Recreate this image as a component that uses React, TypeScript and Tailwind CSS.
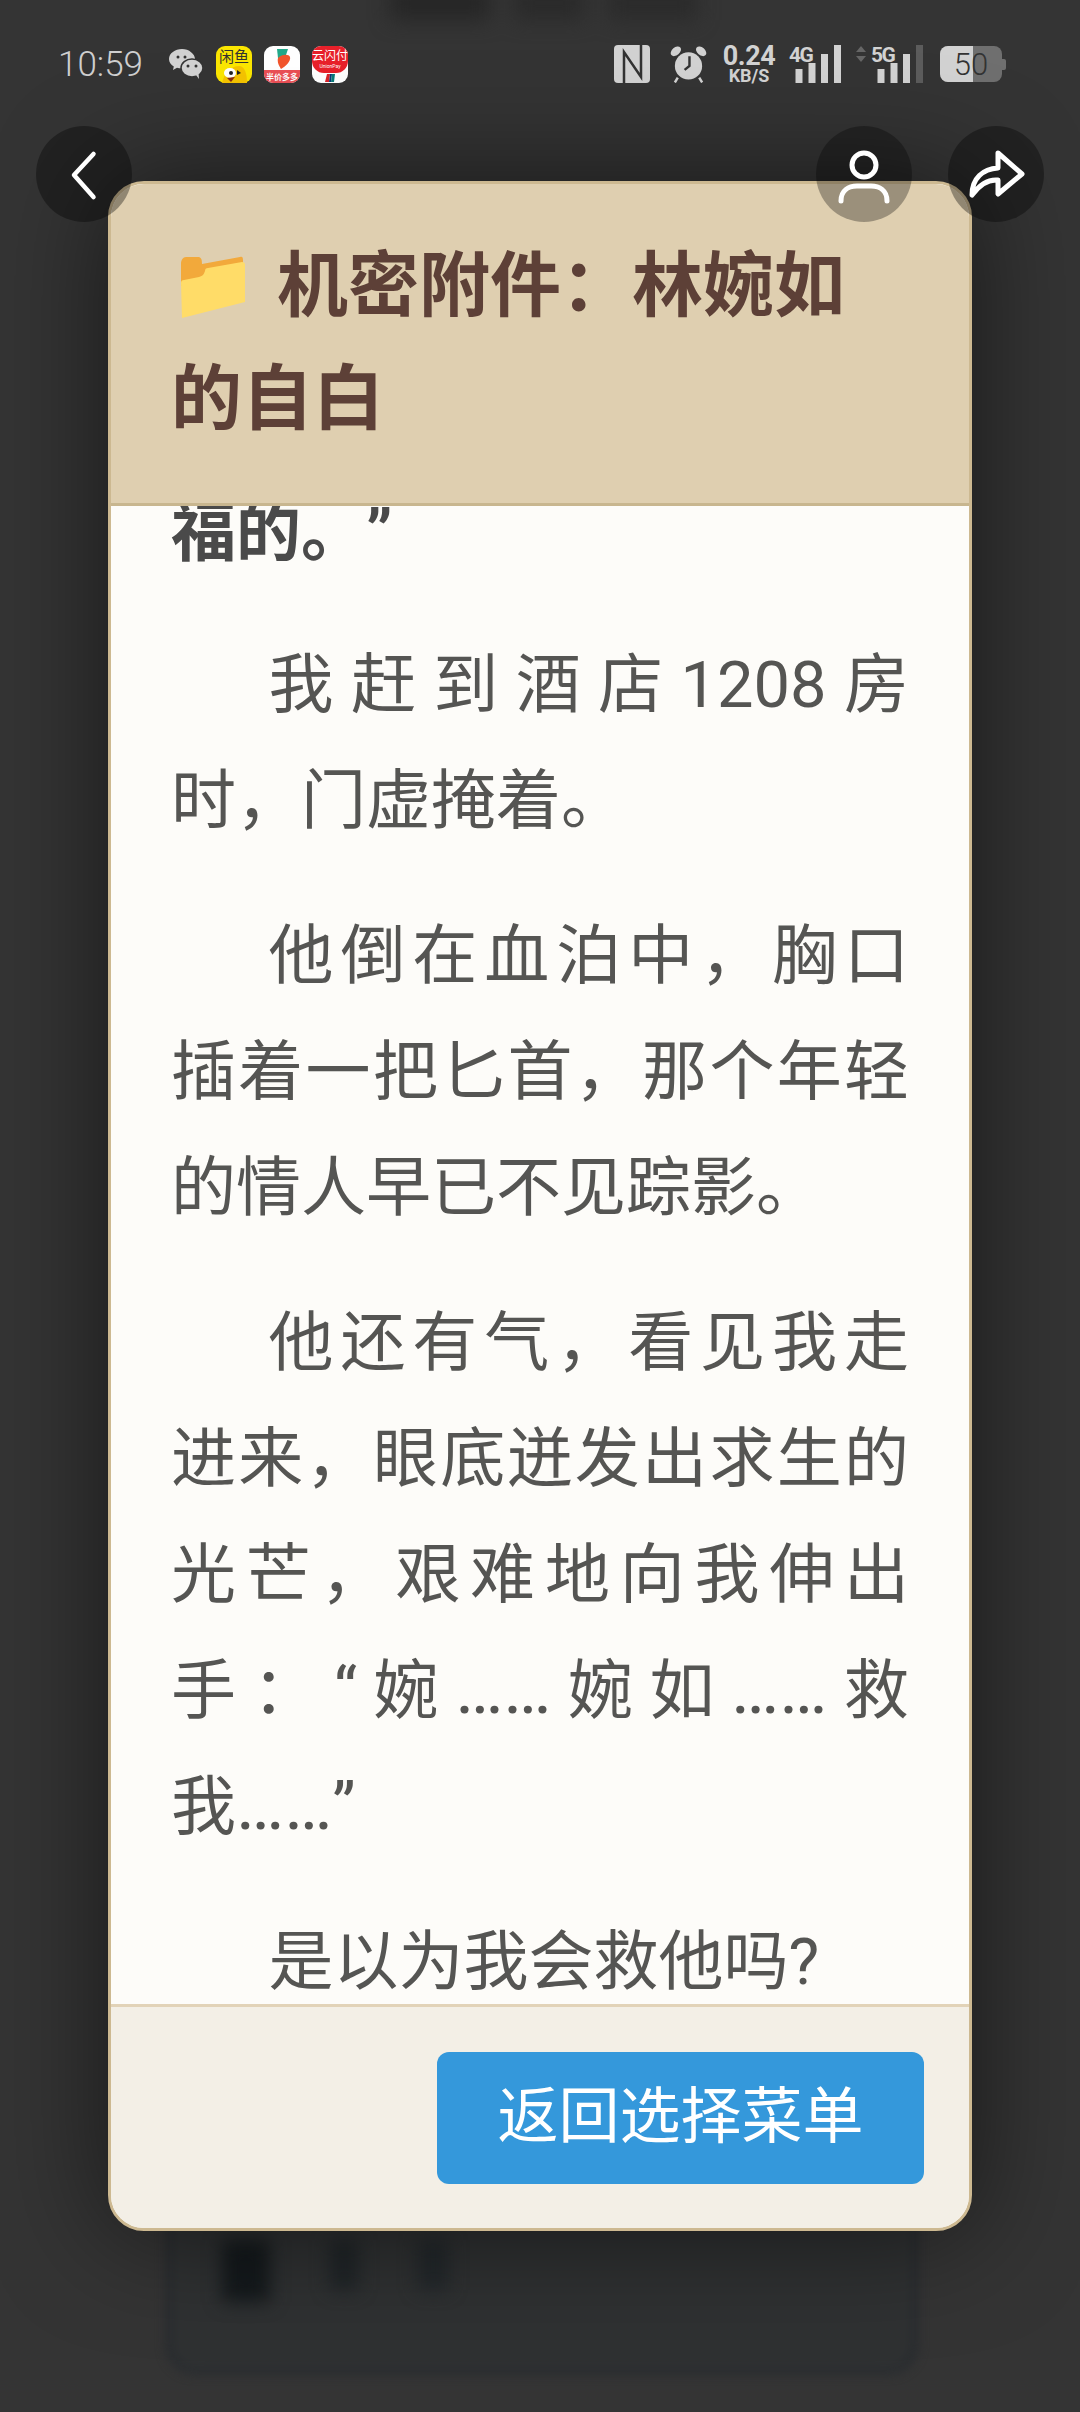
function Signal({ label, last }: { label: string; last?: boolean }) {
  return (
    <svg width="52" height="38" viewBox="0 0 52 38" className="block overflow-visible">
      <text x="0" y="17" fontSize="21" fontWeight="700" letterSpacing="-1.500" fill="#d2d2d2" fontFamily="Roboto, sans-serif">{label}</text>
      <rect x="6.500" y="24" width="7" height="14" fill="#d2d2d2" />
      <rect x="19.500" y="18" width="7" height="20" fill="#d2d2d2" />
      <rect x="32" y="9" width="7" height="29" fill="#d2d2d2" />
      <rect x="45" y="0" width="7" height="38" fill={last ? '#5c5c5c' : '#d2d2d2'} />
    </svg>
  );
}

function StatusBar() {
  return (
    <div className="mt-[45px] flex h-[38px] items-center justify-between pl-[58px] pr-[74px]">
      <div className="flex items-center">
        <span className="w-[111px] text-[35px] font-light leading-none text-[#cfcfcf] font-['Roboto',sans-serif]">10:59</span>
        {/* 微信 */}
        <svg width="34" height="30" viewBox="0 0 34 30">
          <path d="M13 0C6 0 0 4.400 0 10c0 3.200 1.800 5.800 4.800 7.600L4 21l4-2.300c1.400.4 2.700.6 5 .6C20 19.300 26 15 26 10S20 0 13 0z" fill="#d2d2d2" />
          <ellipse cx="23" cy="19" rx="11" ry="9" fill="#d2d2d2" stroke="#333" strokeWidth="1.500" />
          <path d="M27 26l3 4-.5-6z" fill="#d2d2d2" />
          <circle cx="19" cy="17" r="1.500" fill="#333" />
          <circle cx="27" cy="17" r="1.500" fill="#333" />
          <circle cx="9" cy="8" r="1.500" fill="#333" />
          <circle cx="16" cy="8" r="1.500" fill="#333" />
        </svg>
        <div className="ml-[13px] flex h-[37px] w-[36px] flex-col items-center rounded-[9px] bg-[#fbe600]">
          <span className="pt-[1px] text-[15px] leading-[18px] text-[#333] font-['Noto_Sans_CJK_SC',sans-serif]">闲鱼</span>
          <svg width="30" height="18" viewBox="0 0 30 18">
            <path d="M3 18C5 8 12 1 20 1c6 0 8 8 8 17z" fill="#f5c400" />
            <ellipse cx="11" cy="8" rx="6" ry="5" fill="#fff" />
            <circle cx="12" cy="8" r="2" fill="#222" />
            <path d="M18 5l4 3-4 2z" fill="#222" />
            <path d="M8 13l8-1-4 5z" fill="#8a2c10" />
          </svg>
        </div>
        <div className="ml-[12px] flex h-[37px] w-[36px] flex-col items-center overflow-hidden rounded-[9px] bg-white">
          <svg width="24" height="24" viewBox="0 0 24 24" className="shrink-0">
            <path d="M7 3h11l-3 9H8z" fill="#22a98a" />
            <path d="M8 12c4-4 11-4 12-1 1 4-4 9-9 12-2-3-4-7-3-11z" fill="#f2552c" />
          </svg>
          <span className="w-full flex-1 bg-[#ea4f55] text-center text-[8px] font-bold leading-[13px] text-white font-['Noto_Sans_CJK_SC',sans-serif]">半价多多</span>
        </div>
        <div className="ml-[12px] flex h-[37px] w-[36px] flex-col items-center overflow-hidden rounded-[9px] bg-white">
          <div className="flex h-[27px] w-full flex-col items-center rounded-b-[12px] bg-[#e8202a]">
            <span className="text-[12px] leading-[17px] text-white font-['Noto_Sans_CJK_SC',sans-serif]">云闪付</span>
            <span className="text-[5px] leading-[7px] text-white font-['Roboto',sans-serif]">UnionPay</span>
          </div>
          <svg width="10" height="8" viewBox="0 0 10 8" className="mt-[1px]">
            <path d="M2 0h3L4 8H0z" fill="#d8232a" />
            <path d="M5 0h2L6 8H4z" fill="#0a3a78" />
            <path d="M7 0h3L9 8H6z" fill="#0a7a78" />
          </svg>
        </div>
      </div>
      <div className="flex items-center">
        {/* NFC */}
        <svg width="36" height="38" viewBox="0 0 36 38">
          <rect width="36" height="38" rx="4" fill="#d2d2d2" />
          <path d="M10 38V7L27 32V0" fill="none" stroke="#333" strokeWidth="2.500" />
        </svg>
        {/* 闹钟 */}
        <svg width="37" height="38" viewBox="0 0 38 38" className="ml-[20px]">
          <circle cx="19" cy="21" r="14" fill="#d2d2d2" />
          <ellipse cx="6" cy="6" rx="6" ry="4" transform="rotate(-40 6 6)" fill="#d2d2d2" />
          <ellipse cx="32" cy="6" rx="6" ry="4" transform="rotate(40 32 6)" fill="#d2d2d2" />
          <path d="M8 33l-3 5M30 33l3 5" stroke="#d2d2d2" strokeWidth="2.500" />
          <path d="M20 11v10l-5 4" fill="none" stroke="#333" strokeWidth="2.500" />
        </svg>
        <div className="ml-[13px] flex w-[58px] flex-col items-center font-['Roboto',sans-serif] font-bold text-[#d2d2d2]">
          <span className="text-[27px] leading-[23px] tracking-[-0.5px]">0.24</span>
          <span className="text-[18px] leading-[15px]">KB/S</span>
        </div>
        <div className="ml-[11px]"><Signal label="4G" /></div>
        <div className="ml-[15px] flex items-start">
          <svg width="10" height="16" viewBox="0 0 10 16" className="mr-[5px] mt-[1px]">
            <path d="M5 0l5 6H0z" fill="#666" />
            <path d="M5 16l5-6H0z" fill="#666" />
          </svg>
          <Signal label="5G" last />
        </div>
        <div className="ml-[17px] flex items-center">
          <div className="relative flex h-[36px] w-[62px] items-center justify-center overflow-hidden rounded-[8px] bg-[#6f6f6f]">
            <div className="absolute inset-y-0 left-0 w-[33px] bg-[#d2d2d2]" />
            <span className="relative text-[31px] font-light leading-none text-[#333] font-['Roboto',sans-serif]">50</span>
          </div>
          <div className="h-[11px] w-[4px] rounded-r-[2px] bg-[#6f6f6f]" />
        </div>
      </div>
    </div>
  );
}

function BackdropPage() {
  return (
    <>
      {/* 弹窗后面被模糊的页面 */}
      <div className="absolute left-[390px] top-[-14px] flex gap-[24px] blur-[10px]">
        <div className="h-[34px] w-[100px] bg-[#262626]" />
        <div className="h-[34px] w-[70px] bg-[#2a2a2a]" />
        <div className="h-[34px] w-[90px] bg-[#2b2b2b]" />
      </div>
      <div className="absolute left-[165px] top-[2100px] h-[275px] w-[754px] rounded-[30px] border-[8px] border-[#2a2d30] bg-[#2f3132] blur-[5px]" />
      <div className="absolute left-[222px] top-[2240px] flex gap-[60px] blur-[9px]">
        <div className="h-[62px] w-[48px] bg-[#14191c]" />
        <div className="h-[50px] w-[28px] bg-[#1f2427]" />
        <div className="h-[50px] w-[30px] bg-[#22272a]" />
      </div>
    </>
  );
}

function TopButtons() {
  return (
    <div className="absolute left-[36px] right-[36px] top-[126px] z-10 flex items-start justify-between">
      <div className="h-[96px] w-[96px] rounded-full bg-[#000000]/35">
        <svg width="96" height="96" viewBox="0 0 96 96" fill="none" stroke="#fff" strokeWidth="4.500" strokeLinecap="round" strokeLinejoin="round">
          <path d="M57.500 28L38 49L57.500 71" />
        </svg>
      </div>
      <div className="flex gap-[36px]">
        <div className="h-[96px] w-[96px] rounded-full bg-[#000000]/30">
          <svg width="96" height="96" viewBox="0 0 96 96" fill="none" stroke="#fff" strokeWidth="5" strokeLinecap="round">
            <circle cx="48" cy="39" r="12" />
            <path d="M25 75C25 64 33 60 41 60H55C63 60 71 64 71 75" />
          </svg>
        </div>
        <div className="h-[96px] w-[96px] rounded-full bg-[#000000]/35">
          <svg width="96" height="96" viewBox="0 0 96 96" fill="none" stroke="#fff" strokeWidth="5" strokeLinecap="round" strokeLinejoin="round">
            <path d="M24 69C24 52 35 43 50 42V27L74 48L50 68V54C40 53 32 58 24 69Z" />
          </svg>
        </div>
      </div>
    </div>
  );
}

const paragraphClass = 'mb-[39px] indent-[1.5em] text-justify';
const dotsClass = 'text-[72px] leading-none';

export default function App() {
  return (
    <div lang="zh-CN" className="relative h-[2412px] w-[1080px] overflow-hidden bg-[#343434] font-['Roboto','Noto_Sans_CJK_SC',sans-serif]">
      <BackdropPage />
      <div className="relative"><StatusBar /></div>
      <TopButtons />

      <div className="absolute inset-0 flex items-center justify-center">
        <div className="flex h-[85%] w-[80%] flex-col overflow-hidden rounded-[36px] border-[3px] border-[#cdb991] bg-[#fdfcf9] shadow-[0_0_110px_rgba(0,0,0,0.55)]">
          <div className="border-b-[3px] border-[#c8b68f] bg-[#dfcfb0] pb-[48px] pl-[60px] pr-[60px] pt-[45px]">
            <h2 className="text-[71px] font-bold leading-[113px] text-[#5d4037]">
              <svg width="65" height="62" viewBox="0 0 65 62" className="ml-[9px] mr-[32px] inline-block align-[-8px]">
                <path d="M1 8C1 4 3 1 6 1H18C21 1 22 3 22 8L60 1C62 0 63 1 63 4V14L1 30Z" fill="#f2a93b" />
                <path d="M1 27C1 25 2 24 4 24L19 21C23 20 24 18 25 15C25 13 26 12 28 12L62 6C64 6 65 7 65 9V46L2 62Z" fill="#ffdc68" />
              </svg>
              机密附件：林婉如的自白
            </h2>
          </div>
          <div className="min-h-0 flex-1 overflow-hidden px-[60px] text-[65px] font-normal leading-[116px] text-[#555553] [text-spacing-trim:space-all]">
            <div className="-mt-[31px]">
              <p className="mb-[36px] font-bold text-[#4a4a4a]">福的。”</p>
              <p className={paragraphClass}>我赶到酒店1208房时，门虚掩着。</p>
              <p className={paragraphClass}>他倒在血泊中，胸口插着一把匕首，那个年轻的情人早已不见踪影。</p>
              <div className="mb-[39px] indent-[1.5em] text-justify">
                <p className="[text-align-last:justify]">他还有气，看见我走进来，眼底迸发出求生的光芒，艰难地向我伸出手：“婉<span className={dotsClass}>……</span>婉如<span className={dotsClass}>……</span>救</p>
                <p className="indent-0">我<span className={dotsClass}>……</span>”</p>
              </div>
              <p className={paragraphClass}>是以为我会救他吗?</p>
            </div>
          </div>
          <div className="flex justify-end border-t-[3px] border-[#e2d3b8] bg-[#f3efe6] pb-[44px] pr-[45px] pt-[45px]">
            <button className="h-[132px] w-[487px] rounded-[12px] bg-[#3498db] text-[61px] text-white">返回选择菜单</button>
          </div>
        </div>
      </div>
    </div>
  );
}
